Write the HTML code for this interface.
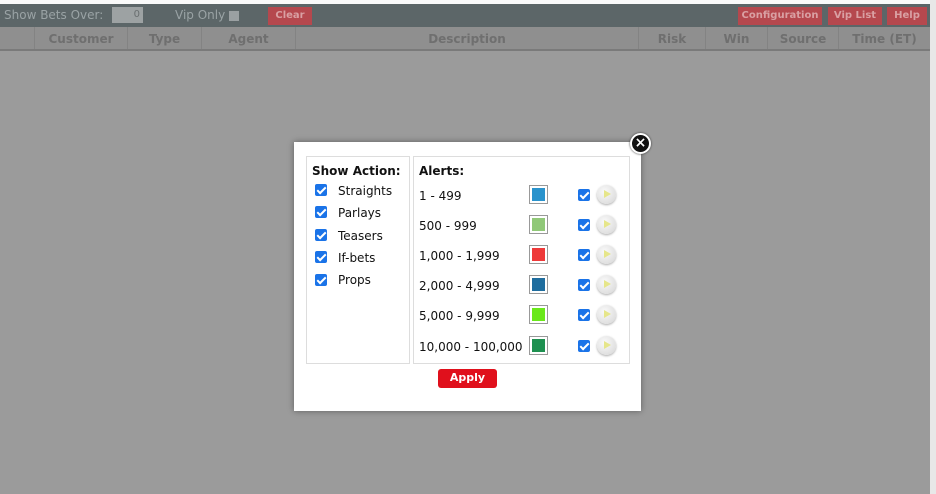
<!DOCTYPE html>
<html><head><style>
*{box-sizing:border-box;margin:0;padding:0}
body{width:936px;height:494px;background:#9b9b9b;font-family:"DejaVu Sans","Liberation Sans",sans-serif;position:relative;overflow:hidden}
.a{position:absolute}
.top{left:0;top:0;width:936px;height:4px;background:#fafafa}
.bar{left:0;top:4px;width:930px;height:23px;background:#5c6668}
.rs{left:930px;top:0;width:6px;height:494px;background:#e8e8e8}
.bar span{position:absolute;color:#9aa3a5;font-size:12px;top:4px}
.btn{position:absolute;background:#b5484e;color:#d9a0a3;font-size:10px;font-weight:bold;top:3px;height:18px;line-height:18px;text-align:center}
.hdr{left:0;top:27px;width:930px;height:24px;background:#8f8f8f;border-bottom:2px solid #7a7a7a}
.hdr div{position:absolute;top:0;height:22px;line-height:25px;font-size:12px;font-weight:bold;color:#6f6f6f;text-align:center;border-left:1px solid #838383}
.modal{left:294px;top:142px;width:347px;height:269px;background:#fff;box-shadow:0 0 6px rgba(0,0,0,.4)}
.box{position:absolute;border:1px solid #ddd}
.t{position:absolute;font-size:12px;color:#111;white-space:nowrap}
.cb{position:absolute;width:12px;height:12px;background:#1a73e8;border-radius:2px}
.cb:after{content:"";position:absolute;left:4px;top:1px;width:3px;height:7px;border:solid #fff;border-width:0 2px 2px 0;transform:rotate(45deg)}
.sw{position:absolute;width:19px;height:19px;border:1px solid #999;padding:2px}
.sw i{display:block;width:100%;height:100%}
.pl{position:absolute;width:19px;height:19px;border-radius:50%;background:radial-gradient(circle at 40% 35%,#fafafa,#d5d5d5);box-shadow:0 1px 2px #aaa}
.pl:after{content:"";position:absolute;left:7px;top:5px;border-left:7px solid #e6e68a;border-top:4px solid transparent;border-bottom:4px solid transparent}
</style></head><body>
<div class="a top"></div>
<div class="a bar">
<span style="left:4px">Show Bets Over:</span>
<div class="a" style="left:112px;top:3px;width:31px;height:16px;background:#9da2a3;color:#6a6f70;font-size:10px;text-align:right;padding-right:3px;line-height:16px">0</div>
<span style="left:175px">Vip Only</span>
<div class="a" style="left:229px;top:7px;width:10px;height:10px;background:#9aa0a2"></div>
<div class="btn" style="left:268px;width:44px">Clear</div>
<div class="btn" style="left:738px;width:84px">Configuration</div>
<div class="btn" style="left:828px;width:54px">Vip List</div>
<div class="btn" style="left:887px;width:40px">Help</div>
</div>
<div class="a hdr">
<div style="left:34px;width:93px">Customer</div>
<div style="left:127px;width:74px">Type</div>
<div style="left:201px;width:94px">Agent</div>
<div style="left:295px;width:343px">Description</div>
<div style="left:638px;width:67px">Risk</div>
<div style="left:705px;width:62px">Win</div>
<div style="left:767px;width:71px">Source</div>
<div style="left:838px;width:92px">Time (ET)</div>
</div>
<div class="a rs"></div>
<div class="a modal">
<div class="box" style="left:12px;top:14px;width:104px;height:208px"></div>
<div class="box" style="left:119px;top:14px;width:217px;height:208px"></div>
<div class="t" style="left:18px;top:22px;font-weight:bold">Show Action:</div>
<div class="cb" style="left:21px;top:42px"></div><div class="t" style="left:44px;top:42px">Straights</div>
<div class="cb" style="left:21px;top:64px"></div><div class="t" style="left:44px;top:64px">Parlays</div>
<div class="cb" style="left:21px;top:87px"></div><div class="t" style="left:44px;top:87px">Teasers</div>
<div class="cb" style="left:21px;top:109px"></div><div class="t" style="left:44px;top:109px">If-bets</div>
<div class="cb" style="left:21px;top:132px"></div><div class="t" style="left:44px;top:131px">Props</div>
<div class="t" style="left:125px;top:22px;font-weight:bold">Alerts:</div>
<div class="t" style="left:125px;top:47px">1 - 499</div><div class="sw" style="left:235px;top:43px"><i style="background:#2a93cc"></i></div><div class="cb" style="left:284px;top:47px"></div><div class="pl" style="left:303px;top:43px"></div>
<div class="t" style="left:125px;top:77px">500 - 999</div><div class="sw" style="left:235px;top:73px"><i style="background:#90c878"></i></div><div class="cb" style="left:284px;top:77px"></div><div class="pl" style="left:303px;top:73px"></div>
<div class="t" style="left:125px;top:107px">1,000 - 1,999</div><div class="sw" style="left:235px;top:103px"><i style="background:#ee3a3a"></i></div><div class="cb" style="left:284px;top:107px"></div><div class="pl" style="left:303px;top:103px"></div>
<div class="t" style="left:125px;top:137px">2,000 - 4,999</div><div class="sw" style="left:235px;top:133px"><i style="background:#1f6d9e"></i></div><div class="cb" style="left:284px;top:137px"></div><div class="pl" style="left:303px;top:133px"></div>
<div class="t" style="left:125px;top:167px">5,000 - 9,999</div><div class="sw" style="left:235px;top:163px"><i style="background:#6ae81a"></i></div><div class="cb" style="left:284px;top:167px"></div><div class="pl" style="left:303px;top:163px"></div>
<div class="t" style="left:125px;top:198px">10,000 - 100,000</div><div class="sw" style="left:235px;top:194px"><i style="background:#1e9050"></i></div><div class="cb" style="left:284px;top:198px"></div><div class="pl" style="left:303px;top:194px"></div>
<div class="a" style="left:144px;top:227px;width:59px;height:19px;background:#e0101c;border-radius:3px;color:#fff;font-size:11px;font-weight:bold;text-align:center;line-height:18px">Apply</div>
</div>
<div class="a" style="left:630px;top:133px;width:21px;height:21px;border-radius:50%;background:#111;border:2px solid #fff;box-shadow:0 0 2px #333;color:#fff;font-size:14px;font-weight:bold;text-align:center;line-height:16px">×</div>
</body></html>
